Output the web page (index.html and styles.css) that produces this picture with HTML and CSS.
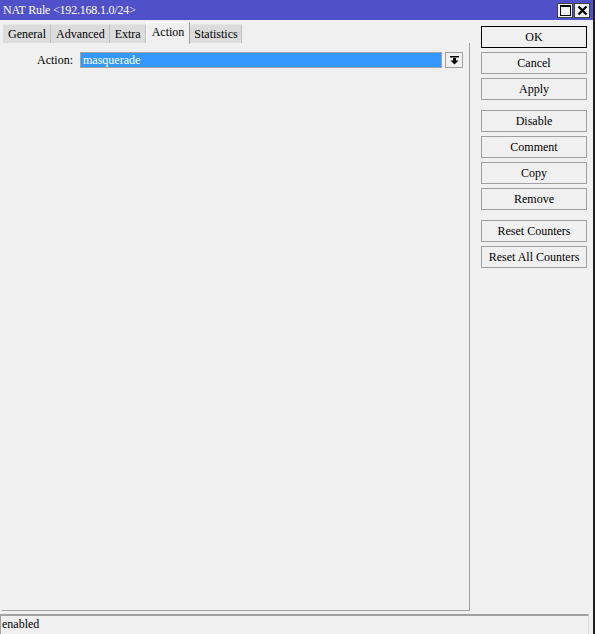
FILE: index.html
```html
<!DOCTYPE html>
<html lang="en">
<head>
    <meta charset="UTF-8">
    <title>NAT Rule</title>
    <link rel="stylesheet" href="styles.css">
</head>
<body>
    <div class="window">
        <header class="titlebar">
            <span class="title">NAT Rule &lt;192.168.1.0/24&gt;</span>
            <div class="win-buttons">
                <span class="win-btn">
                    <svg width="11" height="11" viewBox="0 0 11 11"><rect x="0.5" y="0.5" width="10" height="10" fill="none" stroke="#000"/><rect x="0" y="0" width="11" height="2" fill="#000"/></svg>
                </span>
                <span class="win-btn">
                    <svg width="11" height="11" viewBox="0 0 11 11"><path d="M1.5 1.5 L9.5 9.5 M9.5 1.5 L1.5 9.5" stroke="#000" stroke-width="2.2"/></svg>
                </span>
            </div>
        </header>

        <div class="body">
            <div class="left">
                <ul class="tabs">
                    <li class="tab">General</li>
                    <li class="tab">Advanced</li>
                    <li class="tab">Extra</li>
                    <li class="tab active">Action</li>
                    <li class="tab">Statistics</li>
                </ul>
                <div class="panel">
                    <div class="field-row">
                        <label class="field-label">Action:</label>
                        <div class="select">masquerade</div>
                        <span class="drop-btn">
                            <svg width="9" height="9" viewBox="0 0 9 9"><rect x="0" y="0" width="9" height="1.5" fill="#000"/><path d="M3 2 H6 V4.5 H8.5 L4.5 8.5 L0.5 4.5 H3 Z" fill="#000"/></svg>
                        </span>
                    </div>
                </div>
            </div>

            <aside class="actions">
                <div class="btn-group">
                    <button class="btn default">OK</button>
                    <button class="btn">Cancel</button>
                    <button class="btn">Apply</button>
                </div>
                <div class="btn-group">
                    <button class="btn">Disable</button>
                    <button class="btn">Comment</button>
                    <button class="btn">Copy</button>
                    <button class="btn">Remove</button>
                </div>
                <div class="btn-group">
                    <button class="btn">Reset Counters</button>
                    <button class="btn">Reset All Counters</button>
                </div>
            </aside>
        </div>

        <footer class="statusbar">enabled</footer>
    </div>
</body>
</html>
```

FILE: styles.css
```css
body, ul {
    margin: 0;
    padding: 0;
}

body {
    font-family: "Liberation Serif", "Times New Roman", serif;
    font-size: 12px;
    color: #000;
    background-color: #f0f0f0;
}

.window {
    width: 593px;
    height: 634px;
    border-right: 2px solid #202020;
    display: flex;
    flex-direction: column;
    background-color: #f0f0f0;
}

.titlebar {
    height: 20px;
    background-color: #5050c8;
    color: #fff;
    display: flex;
    align-items: center;
    justify-content: space-between;
    padding-left: 3px;
    box-sizing: border-box;
}

.title {
    font-size: 12px;
    letter-spacing: -0.2px;
}

.win-buttons {
    display: flex;
    gap: 1px;
    margin-right: 3px;
}

.win-btn {
    width: 16px;
    height: 15px;
    box-sizing: border-box;
    background-color: #f0f0f0;
    border: 1px solid #404040;
    display: flex;
    align-items: center;
    justify-content: center;
}

.body {
    flex: 1;
    display: flex;
}

.left {
    width: 471px;
    display: flex;
    flex-direction: column;
    padding-left: 2px;
    box-sizing: border-box;
}

.tabs {
    list-style-type: none;
    display: flex;
    height: 22px;
    margin-top: 1px;
    align-items: flex-end;
    padding-left: 1px;
}

.tab {
    height: 19px;
    line-height: 18px;
    padding: 0 4px 0 5px;
    background-color: #dcdcdc;
    border-right: 1px solid #c0c0c0;
    border-top: 1px solid #e6e6e6;
    box-sizing: border-box;
}

.tab:last-child {
    padding: 0 3px 0 4px;
}

.tab.active {
    height: 22px;
    line-height: 19px;
    background-color: #f0f0f0;
    border-top: 1px solid #fff;
    border-left: 1px solid #fff;
    border-right: 1px solid #a0a0a0;
    padding: 0 5px;
    margin-bottom: -1px;
    position: relative;
}

.panel {
    flex: 1;
    border-right: 1px solid #a0a0a0;
    border-bottom: 1px solid #a0a0a0;
    margin-right: 1px;
    margin-bottom: 3px;
    padding-top: 9px;
}

.field-row {
    display: flex;
    align-items: center;
    height: 16px;
}

.field-label {
    width: 71px;
    text-align: right;
    margin-right: 7px;
}

.select {
    width: 362px;
    height: 16px;
    box-sizing: border-box;
    border: 1px solid #a0a0a0;
    background-color: #3399ff;
    color: #fff;
    line-height: 14px;
    padding-left: 2px;
}

.drop-btn {
    width: 18px;
    height: 16px;
    box-sizing: border-box;
    border: 1px solid #a0a0a0;
    margin-left: 3px;
    display: flex;
    align-items: center;
    justify-content: center;
}

.actions {
    width: 106px;
    margin-left: 10px;
    padding-top: 6px;
    display: flex;
    flex-direction: column;
    gap: 10px;
}

.btn-group {
    display: flex;
    flex-direction: column;
    gap: 4px;
}

.btn {
    height: 22px;
    width: 106px;
    font-family: "Liberation Serif", "Times New Roman", serif;
    font-size: 12px;
    color: #000;
    background-color: #f0f0f0;
    border: 1px solid #a0a0a0;
    padding: 0;
}

.btn.default {
    border: 1px solid #000;
}

.statusbar {
    height: 20px;
    margin-right: 4px;
    border-top: 2px solid #a0a0a0;
    border-left: 1px solid #a0a0a0;
    border-right: 1px solid #e0e0e0;
    box-sizing: border-box;
    padding-left: 1px;
    line-height: 17px;
}
```
